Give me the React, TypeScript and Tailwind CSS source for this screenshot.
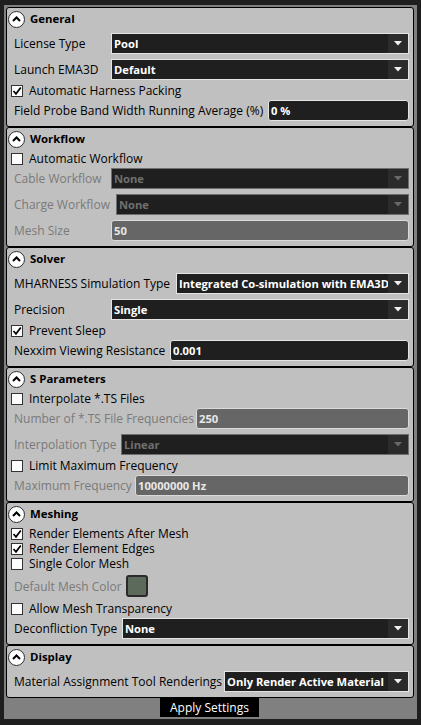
import React from "react";

type Row =
  | { kind: "select"; label: string; value: string; labelW: string; disabled?: boolean }
  | { kind: "input"; label: string; value: string; labelW: string; disabled?: boolean }
  | { kind: "check"; label: string; checked?: boolean }
  | { kind: "color"; label: string; labelW: string };

type Section = { title: string; rows: Row[] };

const sections: Section[] = [
  {
    title: "General",
    rows: [
      { kind: "select", label: "License Type", value: "Pool", labelW: "w-[100px]" },
      { kind: "select", label: "Launch EMA3D", value: "Default", labelW: "w-[100px]" },
      { kind: "check", label: "Automatic Harness Packing", checked: true },
      { kind: "input", label: "Field Probe Band Width Running Average (%)", value: "0 %", labelW: "w-[257px]" },
    ],
  },
  {
    title: "Workflow",
    rows: [
      { kind: "check", label: "Automatic Workflow" },
      { kind: "select", label: "Cable Workflow", value: "None", labelW: "w-[100px]", disabled: true },
      { kind: "select", label: "Charge Workflow", value: "None", labelW: "w-[105px]", disabled: true },
      { kind: "input", label: "Mesh Size", value: "50", labelW: "w-[100px]", disabled: true },
    ],
  },
  {
    title: "Solver",
    rows: [
      { kind: "select", label: "MHARNESS Simulation Type", value: "Integrated Co-simulation with EMA3D", labelW: "w-[165px]" },
      { kind: "select", label: "Precision", value: "Single", labelW: "w-[100px]" },
      { kind: "check", label: "Prevent Sleep", checked: true },
      { kind: "input", label: "Nexxim Viewing Resistance", value: "0.001", labelW: "w-[159px]" },
    ],
  },
  {
    title: "S Parameters",
    rows: [
      { kind: "check", label: "Interpolate *.TS Files" },
      { kind: "input", label: "Number of *.TS File Frequencies", value: "250", labelW: "w-[185px]", disabled: true },
      { kind: "select", label: "Interpolation Type", value: "Linear", labelW: "w-[110px]", disabled: true },
      { kind: "check", label: "Limit Maximum Frequency" },
      { kind: "input", label: "Maximum Frequency", value: "10000000 Hz", labelW: "w-[124px]", disabled: true },
    ],
  },
  {
    title: "Meshing",
    rows: [
      { kind: "check", label: "Render Elements After Mesh", checked: true },
      { kind: "check", label: "Render Element Edges", checked: true },
      { kind: "check", label: "Single Color Mesh" },
      { kind: "color", label: "Default Mesh Color", labelW: "w-[115px]" },
      { kind: "check", label: "Allow Mesh Transparency" },
      { kind: "select", label: "Deconfliction Type", value: "None", labelW: "w-[111px]" },
    ],
  },
  {
    title: "Display",
    rows: [
      { kind: "select", label: "Material Assignment Tool Renderings", value: "Only Render Active Material", labelW: "w-[213px]" },
    ],
  },
];

function CollapseIcon() {
  return (
    <div className="flex h-[17px] w-[17px] shrink-0 items-center justify-center rounded-full border-[1.5px] border-[#2e2e2e] bg-white">
      <svg width="9" height="6" viewBox="0 0 9 6">
        <path d="M1 5 L4.5 1.5 L8 5" fill="none" stroke="#000" strokeWidth="2" />
      </svg>
    </div>
  );
}

function Label({ text, w, disabled }: { text: string; w: string; disabled?: boolean }) {
  return (
    <div
      className={`${w} shrink-0 overflow-hidden whitespace-nowrap pl-[3px] text-[12px] leading-[21px] ${
        disabled ? "text-[#7a7a7a]" : "text-black"
      }`}
    >
      {text}
    </div>
  );
}

function SelectBox({ value, disabled }: { value: string; disabled?: boolean }) {
  return (
    <div
      className={`flex h-[21px] min-w-0 flex-1 border bg-[#1f1f1f] ${
        disabled ? "border-[#6e6e6e]" : "border-[#e4e4e4]"
      }`}
    >
      <div
        className={`min-w-0 flex-1 overflow-hidden whitespace-nowrap pl-[2px] text-[11.2px] font-bold leading-[19px] ${
          disabled ? "text-[#707070]" : "text-white"
        }`}
      >
        {value}
      </div>
      <div className="flex w-[20px] shrink-0 items-center justify-center bg-[#2b2b2b]">
        <svg width="8" height="5" viewBox="0 0 8 5">
          <polygon points="0,0 8,0 4,4.5" fill={disabled ? "#6a6a6a" : "#f2f2f2"} />
        </svg>
      </div>
    </div>
  );
}

function InputBox({ value, disabled }: { value: string; disabled?: boolean }) {
  return (
    <div
      className={`h-[21px] min-w-0 flex-1 overflow-hidden whitespace-nowrap rounded-[3px] border pl-[2px] text-[11.2px] font-bold leading-[19px] ${
        disabled ? "border-[#dadada] bg-[#666666] text-[#e8e8e8]" : "border-[#e4e4e4] bg-[#1f1f1f] text-white"
      }`}
    >
      {value}
    </div>
  );
}

function CheckRow({ label, checked }: { label: string; checked?: boolean }) {
  return (
    <div className="flex h-[15px] items-start">
      <div className="mt-[3px] flex h-[12px] w-[12px] shrink-0 items-center justify-center border border-[#333333] bg-white">
        {checked && (
          <svg width="10" height="10" viewBox="0 0 10 10">
            <path d="M1.5 5 L4 7.8 L8.8 1.5" fill="none" stroke="#000" strokeWidth="1.7" />
          </svg>
        )}
      </div>
      <div className="ml-[6px] mt-[2px] whitespace-nowrap text-[12px] leading-[14px] text-black">{label}</div>
    </div>
  );
}

function RowView({ row }: { row: Row }) {
  if (row.kind === "check") return <CheckRow label={row.label} checked={row.checked} />;
  if (row.kind === "color")
    return (
      <div className="flex items-center pb-[3px] pt-[5px]">
        <Label text={row.label} w={row.labelW} disabled />
        <div className="h-[22px] w-[22px] rounded-[3px] border-2 border-[#2a2a2a] bg-[#5b6a5b]" />
      </div>
    );
  return (
    <div className="flex pb-[2px] pt-[3px]">
      <Label text={row.label} w={row.labelW} disabled={row.disabled} />
      {row.kind === "select" ? (
        <SelectBox value={row.value} disabled={row.disabled} />
      ) : (
        <InputBox value={row.value} disabled={row.disabled} />
      )}
    </div>
  );
}

function Card({ section }: { section: Section }) {
  return (
    <div className="rounded-[3px] border border-black bg-[#c0c0c0] pb-[3px] pl-[4px] pr-[4px]">
      <div className="-ml-[3px] flex h-[22px] items-center gap-[5px]">
        <CollapseIcon />
        <div className="text-[11.4px] font-bold leading-[14px] text-black">{section.title}</div>
      </div>
      {section.rows.map((r, i) => (
        <RowView key={i} row={r} />
      ))}
    </div>
  );
}

export default function App() {
  return (
    <div className="h-[725px] w-[421px] overflow-hidden bg-[#1e1e1e] pl-[4px] pt-[5px] font-['Open_Sans','Noto_Sans',sans-serif]">
      <div className="flex h-[714px] w-[413px] flex-col bg-[#808080] pl-[2px] pr-[3px] pt-[2px]">
        {sections.map((s) => (
          <Card key={s.title} section={s} />
        ))}
        <div className="flex justify-center">
          <div className="mr-[1px] flex h-[19px] w-[99px] items-center justify-center bg-black text-[12px] leading-[19px] text-white">
            Apply Settings
          </div>
        </div>
      </div>
    </div>
  );
}
